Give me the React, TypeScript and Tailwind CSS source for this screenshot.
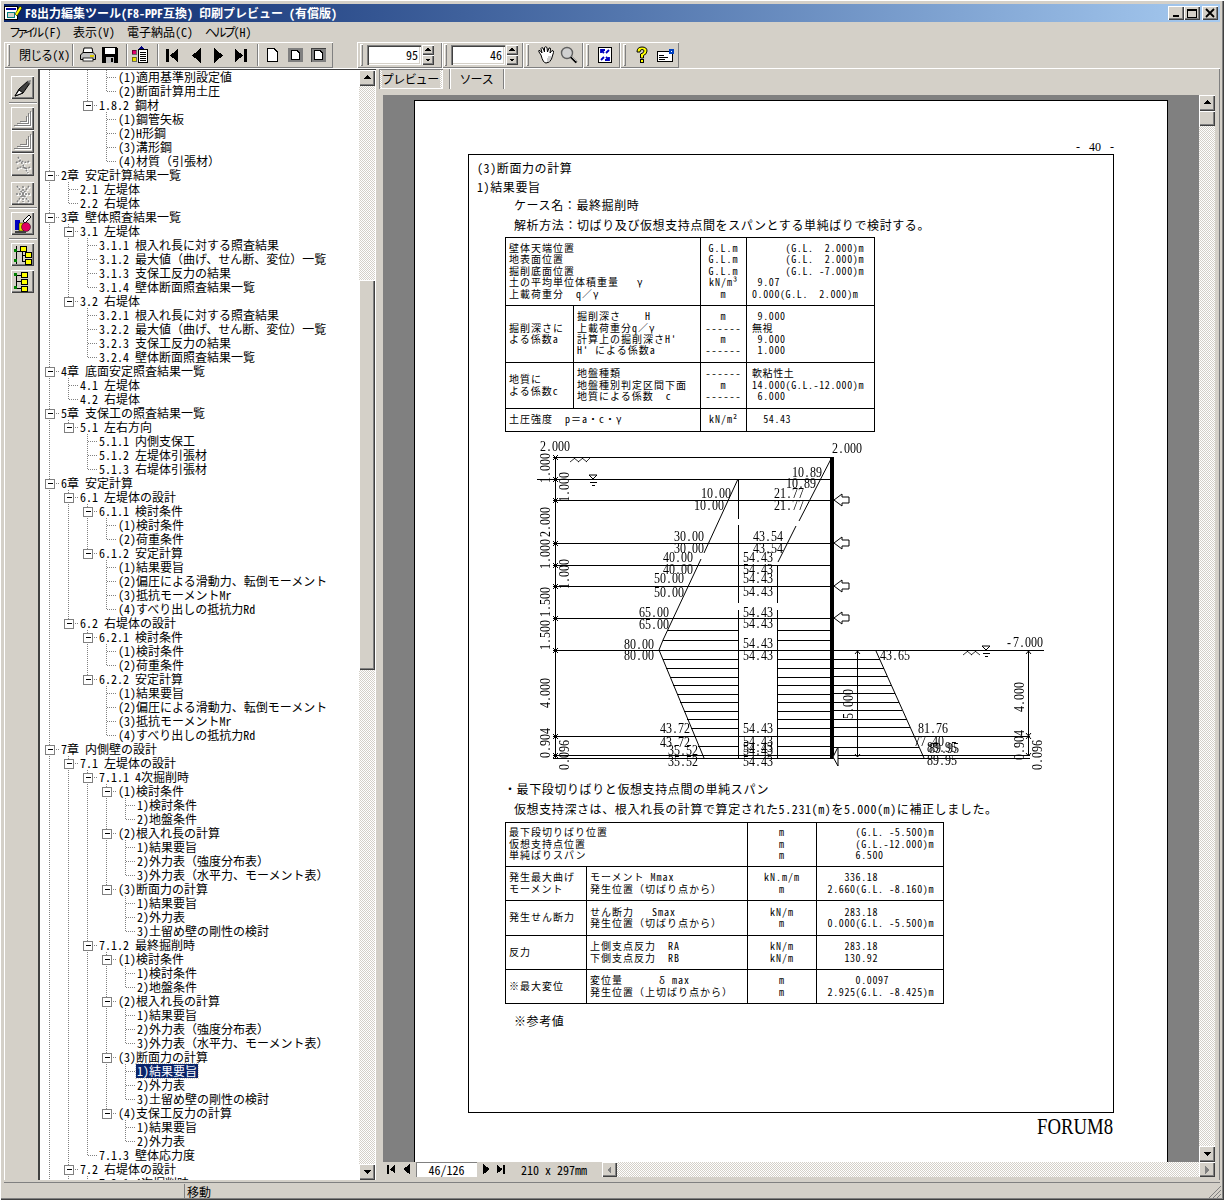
import React from 'react'

const raised = 'shadow-[inset_1px_1px_0_#fff,inset_-1px_-1px_0_#404040,inset_-2px_-2px_0_#808080]'
const sunken = 'shadow-[inset_1px_1px_0_#808080,inset_2px_2px_0_#404040,inset_-1px_-1px_0_#fff,inset_-2px_-2px_0_#d4d0c8]'
const band = 'shadow-[inset_1px_1px_0_#fff,inset_-1px_-1px_0_#808080]'
const checker = 'bg-[repeating-conic-gradient(#d4d0c8_0_25%,#fff_0_50%)] bg-[length:2px_2px]'
const uiText = "[font-feature-settings:'palt','hwid']"

// hwid squeezes full-width punctuation too, so those marks get it switched off
function fw(s: string) {
    return s.split(/([（）：／＝・])/).map((p, i) => (i % 2 ? <span key={i} className="[font-feature-settings:normal]">{p}</span> : p))
}

// tree rows: level, label
const rows: [number, string][] = [
    [3, '(1)適用基準別設定値'], [3, '(2)断面計算用土圧'], [2, '1.8.2 鋼材'], [3, '(1)鋼管矢板'], [3, '(2)H形鋼'], [3, '(3)溝形鋼'], [3, '(4)材質（引張材）'],
    [0, '2章 安定計算結果一覧'], [1, '2.1 左堤体'], [1, '2.2 右堤体'],
    [0, '3章 壁体照査結果一覧'], [1, '3.1 左堤体'], [2, '3.1.1 根入れ長に対する照査結果'], [2, '3.1.2 最大値（曲げ、せん断、変位）一覧'], [2, '3.1.3 支保工反力の結果'], [2, '3.1.4 壁体断面照査結果一覧'],
    [1, '3.2 右堤体'], [2, '3.2.1 根入れ長に対する照査結果'], [2, '3.2.2 最大値（曲げ、せん断、変位）一覧'], [2, '3.2.3 支保工反力の結果'], [2, '3.2.4 壁体断面照査結果一覧'],
    [0, '4章 底面安定照査結果一覧'], [1, '4.1 左堤体'], [1, '4.2 右堤体'],
    [0, '5章 支保工の照査結果一覧'], [1, '5.1 左右方向'], [2, '5.1.1 内側支保工'], [2, '5.1.2 左堤体引張材'], [2, '5.1.3 右堤体引張材'],
    [0, '6章 安定計算'], [1, '6.1 左堤体の設計'], [2, '6.1.1 検討条件'], [3, '(1)検討条件'], [3, '(2)荷重条件'], [2, '6.1.2 安定計算'], [3, '(1)結果要旨'], [3, '(2)偏圧による滑動力、転倒モーメント'], [3, '(3)抵抗モーメントMr'], [3, '(4)すべり出しの抵抗力Rd'],
    [1, '6.2 右堤体の設計'], [2, '6.2.1 検討条件'], [3, '(1)検討条件'], [3, '(2)荷重条件'], [2, '6.2.2 安定計算'], [3, '(1)結果要旨'], [3, '(2)偏圧による滑動力、転倒モーメント'], [3, '(3)抵抗モーメントMr'], [3, '(4)すべり出しの抵抗力Rd'],
    [0, '7章 内側壁の設計'], [1, '7.1 左堤体の設計'], [2, '7.1.1 4次掘削時'], [3, '(1)検討条件'], [4, '1)検討条件'], [4, '2)地盤条件'], [3, '(2)根入れ長の計算'], [4, '1)結果要旨'], [4, '2)外力表（強度分布表）'], [4, '3)外力表（水平力、モーメント表）'], [3, '(3)断面力の計算'], [4, '1)結果要旨'], [4, '2)外力表'], [4, '3)土留め壁の剛性の検討'],
    [2, '7.1.2 最終掘削時'], [3, '(1)検討条件'], [4, '1)検討条件'], [4, '2)地盤条件'], [3, '(2)根入れ長の計算'], [4, '1)結果要旨'], [4, '2)外力表（強度分布表）'], [4, '3)外力表（水平力、モーメント表）'], [3, '(3)断面力の計算'], [4, '1)結果要旨'], [4, '2)外力表'], [4, '3)土留め壁の剛性の検討'], [3, '(4)支保工反力の計算'], [4, '1)結果要旨'], [4, '2)外力表'],
    [2, '7.1.3 壁体応力度'], [1, '7.2 右堤体の設計'], [2, '7.2.1 4次掘削時'],
]
const selectedRow = 71

// does column c keep going below row i?
function continues(i: number, c: number) {
    for (let j = i + 1; j < rows.length; j++) {
        if (rows[j][0] === c) return true
        if (rows[j][0] < c) return false
    }
    return true
}

function Connector({ i }: { i: number }) {
    const level = rows[i][0]
    const hasKids = i + 1 < rows.length && rows[i + 1][0] > level
    const w = 21 + 19 * level
    const dot = { stroke: '#808080', strokeDasharray: '1 1', shapeRendering: 'crispEdges' as const }
    const cx = 9.5 + 19 * level
    const cols = []
    for (let c = 0; c < level; c++) {
        if (continues(i, c)) cols.push(<line key={c} x1={9.5 + 19 * c} x2={9.5 + 19 * c} y1={0} y2={14} {...dot} />)
    }
    return (
        <svg width={w} height={14} className="shrink-0">
            {cols}
            <line x1={cx} x2={cx} y1={0} y2={continues(i, level) ? 14 : 7} {...dot} />
            <line x1={cx} x2={cx + 10} y1={7.5} y2={7.5} {...dot} />
            {hasKids && (
                <g shapeRendering="crispEdges">
                    <rect x={cx - 4} y={3.5} width={9} height={9} fill="#fff" stroke="#808080" />
                    <line x1={cx - 2} x2={cx + 3} y1={7.5} y2={7.5} stroke="#000" />
                </g>
            )}
        </svg>
    )
}

function Tree() {
    return (
        <div className="flex-1 overflow-hidden bg-white">
            {rows.map((r, i) => (
                <div key={i} className="flex h-[14px] items-center whitespace-pre text-[12px] leading-[14px] text-black">
                    <Connector i={i} />
                    <span className={i === selectedRow ? 'ml-[-1px] bg-[#0a246a] pl-px pr-px text-white outline-1 outline-dotted outline-[#d4d0c8]' : ''}>{fw(r[1])}</span>
                </div>
            ))}
        </div>
    )
}

function Tri({ dir, disabled }: { dir: 'up' | 'down' | 'left' | 'right'; disabled?: boolean }) {
    const pts = { up: '1,6 5,2 9,6', down: '1,3 9,3 5,7', left: '6,1 6,9 2,5', right: '3,1 3,9 7,5' }[dir]
    return (
        <svg width={10} height={10} shapeRendering="crispEdges">
            <polygon points={pts} fill={disabled ? '#808080' : '#000'} />
        </svg>
    )
}

function ScrollBtn({ dir, disabled, className }: { dir: 'up' | 'down' | 'left' | 'right'; disabled?: boolean; className?: string }) {
    return (
        <div className={`flex shrink-0 items-center justify-center bg-[#d4d0c8] ${raised} ${className ?? ''}`}>
            <Tri dir={dir} disabled={disabled} />
        </div>
    )
}

function Gripper({ className }: { className?: string }) {
    return <div className={`h-[22px] w-[3px] shrink-0 bg-[#d4d0c8] shadow-[inset_1px_1px_0_#fff,inset_-1px_-1px_0_#808080] ${className ?? ''}`} />
}

function Sep({ ml }: { ml: string }) {
    return <div className={`h-[22px] w-[2px] shrink-0 border-l border-r border-l-[#808080] border-r-white ${ml}`} />
}

function Spin({ value, ml }: { value: string; ml: string }) {
    return (
        <div className={`flex shrink-0 ${ml}`}>
            <div className={`flex h-[20px] w-[54px] items-center justify-end bg-white pr-[3px] text-[12px] ${sunken}`}>{value}</div>
            <div className="ml-px flex w-[12px] flex-col">
                <ScrollBtn dir="up" className="h-[10px] w-[12px] [&>svg]:scale-75" />
                <ScrollBtn dir="down" className="h-[10px] w-[12px] [&>svg]:scale-75" />
            </div>
        </div>
    )
}

/* toolbar drawings */
const AppIcon = () => (
    <svg width={18} height={16} shapeRendering="crispEdges">
        <rect x={0.5} y={1.5} width={13} height={13} fill="#fff" stroke="#000" />
        <rect x={2} y={3} width={10} height={2} fill="#0000a0" />
        <rect x={3} y={7} width={7} height={5} fill="#d4d0c8" stroke="#008080" />
        <path d="M11 9 L16 1 L18 3 L13 11 Z" fill="#ffff00" stroke="#000" strokeWidth={0.6} shapeRendering="auto" />
    </svg>
)
const Printer = () => (
    <svg width={18} height={16} className="shrink-0">
        <path d="M5 1 H13 L14 6 H4 Z" fill="#fff" stroke="#000" />
        <path d="M1.5 8 L4 5.5 H14 L16.5 8 V12.5 H1.5 Z" fill="#c0c0c0" stroke="#000" />
        <rect x={4} y={11} width={10} height={3} fill="#fff" stroke="#000" strokeWidth={0.8} />
        <rect x={11} y={8} width={4} height={2} fill="#e0d000" />
    </svg>
)
const Floppy = () => (
    <svg width={16} height={16} className="shrink-0" shapeRendering="crispEdges">
        <path d="M0 0 H14 L16 2 V16 H0 Z" fill="#000" />
        <rect x={3} y={1} width={10} height={6} fill="#fff" />
        <rect x={4} y={10} width={8} height={6} fill="#c0c0c0" />
        <rect x={9} y={11} width={2} height={4} fill="#000" />
    </svg>
)
const ListIcon = () => (
    <svg width={16} height={18} className="shrink-0" shapeRendering="crispEdges">
        <path d="M9 0 L12 3 H6 Z" fill="#000080" />
        <rect x={6.5} y={3.5} width={9} height={13} fill="#fff" stroke="#000" />
        <path d="M8 6H14M8 8H14M8 10H14M8 12H14M8 14H14" stroke="#000" />
        <rect x={0} y={4} width={4} height={4} fill="#e0006a" stroke="#000" strokeWidth={0.5} />
        <rect x={0} y={11} width={4} height={4} fill="#e8e000" stroke="#000" strokeWidth={0.5} />
    </svg>
)
const Nav = ({ kind, size = 13 }: { kind: 'first' | 'prev' | 'next' | 'last'; size?: number }) => (
    <svg width={size} height={(size * 15) / 13} viewBox="0 0 13 15" className="block shrink-0" shapeRendering="crispEdges">
        {kind === 'first' && <path d="M0 1H3V14H0Z M12 1V14L4 7.5Z" />}
        {kind === 'prev' && <path d="M11 0V15L2 7.5Z" />}
        {kind === 'next' && <path d="M2 0V15L11 7.5Z" />}
        {kind === 'last' && <path d="M9 1H12V14H9Z M0 1V14L8 7.5Z" />}
    </svg>
)
const PageIco = ({ framed }: { framed?: number }) => (
    <svg width={15} height={14} className="shrink-0" shapeRendering="crispEdges">
        {framed === 1 && <rect x={0} y={0} width={15} height={14} fill="#808080" />}
        {framed === 2 && <rect x={0} y={0} width={15} height={14} fill="#808080" stroke="#000" strokeWidth={0.5} />}
        <path d={framed ? 'M3.5 2.5 H9 L11.5 5 V11.5 H3.5 Z' : 'M2.5 0.5 H9 L12.5 4 V13.5 H2.5 Z'} fill="#fff" stroke="#000" />
    </svg>
)
const Hand = () => (
    <svg width={18} height={18} className="shrink-0">
        <path d="M4 9 L2 6 Q1 4 3 4.5 L5 7 L4 2.5 Q4.5 1 6 2 L7.5 6 V1.5 Q8.5 0 10 1.5 L10.5 6 L12 2 Q13.5 1.5 13.5 3 L13 7 L15 4.5 Q17 4.5 16.5 6.5 L14.5 13 Q13 17 9 17 Q6 17 4 9 Z" fill="#fff" stroke="#000" />
        <path d="M11 11H14M10 13H14M10 15H13" stroke="#a0a0a0" />
    </svg>
)
const Magnifier = () => (
    <svg width={18} height={18} className="shrink-0">
        <circle cx={7} cy={7} r={5.5} fill="#d0d0d0" stroke="#606060" strokeWidth={1.4} />
        <path d="M11 11 L16.5 16.5" stroke="#000" strokeWidth={2.4} />
        <path d="M11.5 10.5 L16.5 15.5" stroke="#fff" strokeWidth={0.7} />
    </svg>
)
const FitIcon = () => (
    <svg width={14} height={16} className="shrink-0">
        <rect x={0.5} y={0.5} width={13} height={15} fill="#fff" stroke="#000" />
        <path d="M3 6 V3 H7 M11 10 V13 H7 M3 3 L6 6 M11 13 L8 10 M11 3 L8 6 M3 13 L6 10" stroke="#0000c0" strokeWidth={1.8} fill="none" />
    </svg>
)
const Question = () => (
    <svg width={14} height={18} className="shrink-0">
        <path d="M2 6 Q2 1 7 1 Q12 1 12 5 Q12 8 8.5 9.5 V12 H5.5 V8 Q9 7 9 5 Q9 3.5 7 3.5 Q5 3.5 5 6 Z" fill="#ffff00" stroke="#000" />
        <rect x={5.5} y={13.5} width={3} height={3} fill="#ffff00" stroke="#000" />
    </svg>
)
const Card = () => (
    <svg width={17} height={13} className="shrink-0" shapeRendering="crispEdges">
        <rect x={0.5} y={2.5} width={15} height={10} fill="#fff" stroke="#000" />
        <path d="M2 6H7M2 8H11M2 10H8" stroke="#000" />
        <rect x={12} y={0} width={5} height={5} fill="#0040c0" />
        <rect x={14} y={2} width={1} height={1} fill="#fff" />
    </svg>
)

const ToolBtn = ({ children, y = '' }: { children?: React.ReactNode; y?: string }) => (
    <div className={`flex h-[23px] w-[23px] items-center justify-center bg-[#d4d0c8] ${raised} ${y}`}>{children}</div>
)
const HSep = ({ my }: { my: string }) => <div className={`h-[2px] w-[28px] shrink-0 border-b border-t border-b-white border-t-[#808080] ${my}`} />

const Stairs = () => (
    <svg width={19} height={17} shapeRendering="crispEdges">
        <path d="M17 1V15H1M4 13H15V3M7 11H13V6" fill="none" stroke="#808080" />
        <path d="M18 2V16H2M5 14H16V4M8 12H14V7" fill="none" stroke="#fff" />
    </svg>
)
const Ghost = ({ rot }: { rot?: boolean }) => (
    <svg width={18} height={20} viewBox="0 0 18 20">
        <path d={rot ? 'M3 2L15 18M15 2L3 18M2 10H16M9 2V18' : 'M4 2L14 18M2 8C7 3 12 10 15 6M3 14C8 9 12 16 16 12'} fill="none" stroke="#fff" strokeWidth={2.4} strokeDasharray="2 1" transform="translate(.8 .8)" />
        <path d={rot ? 'M3 2L15 18M15 2L3 18M2 10H16M9 2V18' : 'M4 2L14 18M2 8C7 3 12 10 15 6M3 14C8 9 12 16 16 12'} fill="none" stroke="#808080" strokeWidth={1.5} strokeDasharray="2 1" />
    </svg>
)
const TreeIco = ({ tall }: { tall?: boolean }) => (
    <svg width={18} height={20} shapeRendering="crispEdges">
        <path d={tall ? 'M2 1V19 M2 6H8 M8 6V16 M8 10H12 M8 16H12' : 'M2 3V16 M2 3H8 M2 9H8 M2 16H8'} fill="none" stroke="#000" strokeWidth={1} />
        {(tall ? [[6, 1], [11, 7], [11, 14]] : [[7, 0], [7, 7], [7, 14]]).map(([x, y], k) => (
            <rect key={k} x={x + 0.5} y={y + 0.5} width={6} height={5} fill="#ffff00" stroke="#000" />
        ))}
        <rect x={0} y={tall ? 4 : 1} width={3} height={3} fill="#008000" />
        <rect x={0} y={14} width={3} height={3} fill="#008000" />
    </svg>
)

/* pressure diagram: tall glyphs squeezed to a 6px pitch */
function T({ x, y, s, rot }: { x: number; y: number; s: string; rot?: boolean }) {
    const xs = s.split('').map((c, i) => i * 7.5 + (c === '.' ? 2 : 0)).join(' ')
    return (
        <text x={xs} y={0} fontFamily="Liberation Serif, serif" fontSize={15} fill="#000" transform={`translate(${x} ${y}) ${rot ? 'rotate(-90) ' : ''}scale(.8 1)`}>
            {s}
        </text>
    )
}

function Diagram() {
    const lv = [479, 500, 543, 565, 586, 618, 650, 736, 755, 758]
    const hL = [630, 640.5, 659, 668, 677, 685, 694, 702, 711, 719, 728, 746]
    const hR = [659, 668, 676, 685, 693, 702, 710, 719, 727, 747]
    const edgeL = (y: number) => (y < 650 ? 659 + ((650 - y) * 79) / 171 : 659 + ((y - 650) * 44) / 108)
    const edgeR = (y: number) => 876 + ((y - 651) * 48) / 107
    const labels: [number, number, string][] = [
        [540, 451, '2.000'], [832, 453, '2.000'],
        [792, 477, '10.89'], [786, 488, '10.89'], [774, 498, '21.77'], [774, 510, '21.77'],
        [701, 498, '10.00'], [694, 510, '10.00'], [674, 541, '30.00'], [674, 553, '30.00'], [663, 562, '40.00'], [663, 574, '40.00'],
        [654, 583, '50.00'], [654, 597, '50.00'], [639, 617, '65.00'], [639, 629, '65.00'], [624, 649, '80.00'], [624, 660, '80.00'],
        [660, 733, '43.72'], [660, 747, '43.72'], [668, 755, '35.52'], [668, 766, '35.52'],
        [753, 541, '43.54'], [753, 553, '43.54'],
        ...[562, 574, 583, 596, 617, 628, 648, 660, 733, 746, 752, 755, 766].map((y): [number, number, string] => [743, y, '54.43']),
        [880, 660, '43.65'], [918, 733, '81.76'], [914, 746, '77.40'], [927, 752, '89.95'], [929, 753, '89.95'], [927, 765, '89.95'],
        [1007, 647, '-7.000'],
    ]
    const rotated: [number, number, string][] = [
        [550, 483, '1.000'], [550, 537, '2.000'], [550, 569, '1.000'], [550, 617, '1.500'], [550, 650, '1.500'], [550, 708, '4.000'], [550, 758, '0.904'],
        [569, 502, '1.000'], [569, 589, '1.000'], [569, 770, '0.096'],
        [853, 719, '5.000'], [1024, 712, '4.000'], [1024, 760, '0.904'], [1042, 770, '0.096'],
    ]
    return (
        <svg width={530} height={346} viewBox="530 432 530 346" className="ml-[53px] block [will-change:transform]">
            <g shapeRendering="crispEdges" stroke="#000" fill="none">
                <line x1={553} x2={832} y1={457.5} y2={457.5} />
                {lv.map(y => (
                    <line key={y} x1={y === 479 ? 537 : 553} x2={y >= 736 ? 1030 : y === 650 ? 1044 : 832} y1={y + 0.5} y2={y + 0.5} />
                ))}
                <line x1={555.5} x2={555.5} y1={457} y2={759} />
                <line x1={738.5} x2={738.5} y1={479} y2={519} />
                <line x1={738.5} x2={738.5} y1={525} y2={603} />
                <line x1={738.5} x2={738.5} y1={610} y2={758} />
                <line x1={777.5} x2={777.5} y1={565} y2={603} />
                <line x1={777.5} x2={777.5} y1={610} y2={758} />
                {hL.map(y => (
                    <line key={y} x1={edgeL(y)} x2={738} y1={y} y2={y} />
                ))}
                {hL.map(y => (
                    <line key={y} x1={778} x2={831} y1={y} y2={y} />
                ))}
                {hR.map(y => (
                    <line key={y} x1={832} x2={edgeR(y)} y1={y} y2={y} />
                ))}
                <rect x={830} y={457} width={3} height={301} fill="#000" />
                <line x1={857.5} x2={857.5} y1={651} y2={757} />
                <line x1={1028.5} x2={1028.5} y1={651} y2={756} />
            </g>
            <g stroke="#000" fill="none">
                <path d="M738 479 L704 553 M701 559 L663 640 L659 650 L704 758" />
                <path d="M832 457 L799 521 M796 526 L778 562" />
                <path d="M876 651 L924 758" />
                {[457, 479, 500, 543, 565, 586, 618, 650, 736, 755].map(y => (
                    <path key={y} d={`M553 ${y - 2} L558 ${y + 3} M558 ${y - 2} L553 ${y + 3}`} />
                ))}
                <path d="M570 462 L575 458 M574 458 L579 462 M578 462 L583 458 M582 458 L587 462 M586 462 L590 458" strokeWidth={0.8} />
                <path d="M963 655 L968 651 M967 651 L972 655 M971 655 L976 651 M975 651 L980 655" strokeWidth={0.8} />
                <path d="M589 475 H597 L593 479 Z M590 482.5 H597 M592 485.5 H595" />
                <path d="M982 646 H990 L986 650 Z M983 653.5 H990 M985 656.5 H988" />
                {[500, 543, 586, 618].map(y => (
                    <path key={y} d={`M834 ${y} L842 ${y - 6} V${y - 3} H849 V${y + 3} H842 V${y + 6} Z`} fill="#fff" />
                ))}
                <path d="M833 757 L838 747 V766 Z" fill="#fff" />
                <path d="M855 654 L857.5 651 L860 654 M855 754 L857.5 757 L860 754" />
                <path d="M1026 654 L1028.5 651 L1031 654 M1026 739 L1031 733 M1031 739 L1026 733 M1026 753 L1028.5 756 L1031 753" />
            </g>
            {labels.map(([x, y, s], k) => (
                <T key={k} x={x} y={y} s={s} />
            ))}
            {rotated.map(([x, y, s], k) => (
                <T key={k} x={x} y={y} s={s} rot />
            ))}
        </svg>
    )
}

const cell = 'border border-black whitespace-pre align-middle px-[3px] pt-0 pb-[2px]'
const unit = 'border border-black whitespace-pre align-middle text-center p-0 pb-[2px]'
const val = 'border border-black whitespace-pre align-middle pl-[5px] pr-0 pt-0 pb-[2px] tracking-[0.6px]'

function Table1() {
    return (
        <table className="ml-[28px] w-[369px] table-fixed border-collapse text-[10px] leading-[11.4px] tracking-[1px] text-black">
            <colgroup><col className="w-[68px]" /><col className="w-[127px]" /><col className="w-[46px]" /><col className="w-[128px]" /></colgroup>
            <tbody>
                <tr className="h-[68px]">
                    <td colSpan={2} className={cell}>{fw('壁体天端位置\n地表面位置\n掘削底面位置\n土の平均単位体積重量   γ\n上載荷重分  q／γ')}</td>
                    <td className={unit}>{'G.L.m\nG.L.m\nG.L.m\nkN/m³\nm'}</td>
                    <td className={val}>{'      (G.L.  2.000)m\n      (G.L.  2.000)m\n      (G.L. -7.000)m\n 9.07\n0.000(G.L.  2.000)m'}</td>
                </tr>
                <tr className="h-[57px]">
                    <td className={cell}>{'掘削深さに\nよる係数a'}</td>
                    <td className={cell}>{fw('掘削深さ    H\n上載荷重分q／γ\n計算上の掘削深さH\'\nH\' による係数a')}</td>
                    <td className={unit}>{'m\n------\nm\n------'}</td>
                    <td className={val}>{' 9.000\n無視\n 9.000\n 1.000'}</td>
                </tr>
                <tr className="h-[46px]">
                    <td className={cell}>{'地質に\nよる係数c'}</td>
                    <td className={cell}>{'地盤種類\n地盤種別判定区間下面\n地質による係数  c'}</td>
                    <td className={unit}>{'------\nm\n------'}</td>
                    <td className={val}>{'軟粘性土\n14.000(G.L.-12.000)m\n 6.000'}</td>
                </tr>
                <tr className="h-[23px]">
                    <td colSpan={2} className={cell}>{fw('土圧強度  p＝a・c・γ')}</td>
                    <td className={unit}>kN/m²</td>
                    <td className={val}>{'  54.43'}</td>
                </tr>
            </tbody>
        </table>
    )
}

function Table2() {
    return (
        <table className="ml-[28px] w-[438px] table-fixed border-collapse text-[10px] leading-[11.4px] tracking-[1px] text-black">
            <colgroup><col className="w-[81px]" /><col className="w-[161px]" /><col className="w-[69px]" /><col className="w-[127px]" /></colgroup>
            <tbody>
                <tr className="h-[44px]">
                    <td colSpan={2} className={cell}>{'最下段切りばり位置\n仮想支持点位置\n単純ばりスパン'}</td>
                    <td className={unit}>{'m\nm\nm'}</td>
                    <td className={val}>{'      (G.L. -5.500)m\n      (G.L.-12.000)m\n      6.500'}</td>
                </tr>
                <tr className="h-[34px]">
                    <td className={cell}>{'発生最大曲げ\nモーメント'}</td>
                    <td className={cell}>{fw('モーメント Mmax\n発生位置（切ばり点から）')}</td>
                    <td className={unit}>{'kN.m/m\nm'}</td>
                    <td className={val}>{'    336.18\n 2.660(G.L. -8.160)m'}</td>
                </tr>
                <tr className="h-[35px]">
                    <td className={cell}>発生せん断力</td>
                    <td className={cell}>{fw('せん断力   Smax\n発生位置（切ばり点から）')}</td>
                    <td className={unit}>{'kN/m\nm'}</td>
                    <td className={val}>{'    283.18\n 0.000(G.L. -5.500)m'}</td>
                </tr>
                <tr className="h-[34px]">
                    <td className={cell}>反力</td>
                    <td className={cell}>{'上側支点反力  RA\n下側支点反力  RB'}</td>
                    <td className={unit}>{'kN/m\nkN/m'}</td>
                    <td className={val}>{'    283.18\n    130.92'}</td>
                </tr>
                <tr className="h-[34px]">
                    <td className={cell}>※最大変位</td>
                    <td className={cell}>{fw('変位量      δ max\n発生位置（上切ばり点から）')}</td>
                    <td className={unit}>{'m\nm'}</td>
                    <td className={val}>{'      0.0097\n 2.925(G.L. -8.425)m'}</td>
                </tr>
            </tbody>
        </table>
    )
}

function Page() {
    return (
        <div className="h-[1100px] w-[754px] shrink-0 border border-black bg-white pl-[53px] pt-[40px] text-[12px] leading-[12px] tracking-[0.6px] text-black">
            <div className="w-[646px] text-right text-[12px] leading-[12px] tracking-normal whitespace-pre [word-spacing:6px] [font-family:'Liberation_Serif',serif]">- 40 -</div>
            <div className="mt-px h-[959px] w-[646px] border border-black pl-[8px] pt-[7px]">
                <div>(3)断面力の計算</div>
                <div className="mt-[7px]">1)結果要旨</div>
                <div className="ml-[37px] mt-[6px]">{fw('ケース名：最終掘削時')}</div>
                <div className="ml-[37px] mt-[8px]">{fw('解析方法：切ばり及び仮想支持点間をスパンとする単純ばりで検討する。')}</div>
                <div className="mt-[6px]"><Table1 /></div>
                <Diagram />
                <div className="ml-[27px] mt-[5px]">{fw('・最下段切りばりと仮想支持点間の単純スパン')}</div>
                <div className="ml-[37px] mt-[8px]">仮想支持深さは、根入れ長の計算で算定された5.231(m)を5.000(m)に補正しました。</div>
                <div className="mt-[7px]"><Table2 /></div>
                <div className="ml-[37px] mt-[11px]">※参考値</div>
            </div>
            <div className="mt-[1px] w-[645px] origin-right scale-x-[0.78] text-right text-[24px] leading-[24px] tracking-normal [font-family:'Liberation_Serif',serif]">FORUM8</div>
        </div>
    )
}

export default function App() {
    return (
        <div className="flex h-[1200px] w-[1224px] flex-col overflow-hidden bg-[#d4d0c8] pl-[4px] pr-[4px] pt-[4px] text-black [font-family:'Noto_Sans_CJK_JP',sans-serif] [font-feature-settings:'hwid'] shadow-[inset_1px_1px_0_#fff,inset_-1px_-1px_0_#404040,inset_-2px_-2px_0_#808080]">
            {/* title bar */}
            <div className="flex h-[18px] shrink-0 items-center bg-gradient-to-r from-[#0a246a] to-[#a6caf0] pr-[2px]">
                <AppIcon />
                <span className="ml-[3px] whitespace-pre text-[12px] font-bold leading-[18px] text-white">F8出力編集ツール(F8-PPF互換) 印刷プレビュー (有償版)</span>
                <div className={`ml-auto flex h-[14px] w-[16px] items-end justify-center bg-[#d4d0c8] pb-[3px] ${raised}`}><div className="h-[2px] w-[6px] bg-black" /></div>
                <div className={`flex h-[14px] w-[16px] items-center justify-center bg-[#d4d0c8] ${raised}`}><div className="h-[9px] w-[10px] border border-t-2 border-black" /></div>
                <div className={`ml-[2px] flex h-[14px] w-[16px] items-center justify-center bg-[#d4d0c8] ${raised}`}>
                    <svg width={10} height={10}><path d="M1 1L9 9M9 1L1 9" stroke="#000" strokeWidth={1.8} /></svg>
                </div>
            </div>
            {/* menu */}
            <div className={`flex h-[20px] shrink-0 items-center whitespace-nowrap pl-[6px] text-[12px] text-black ${uiText}`}>
                <span className="w-[63px]"><span className="tracking-[-2.5px]">ファイル</span><span className="ml-[2px]">(F)</span></span>
                <span className="w-[54px]">表示(V)</span>
                <span className="w-[78px]">電子納品(C)</span>
                <span><span className="tracking-[-2px]">ヘルプ</span>(H)</span>
            </div>
            {/* toolbar */}
            <div className="flex h-[27px] shrink-0 border-b border-b-white">
                <div className={`flex h-[26px] w-[329px] shrink-0 items-center ${band}`}>
                    <Gripper className="ml-[3px]" />
                    <span className={`ml-[9px] w-[45px] shrink-0 whitespace-nowrap text-[12px] ${uiText}`}>閉じる(X)</span>
                    <Sep ml="ml-[8px]" />
                    <span className="ml-[5px]"><Printer /></span>
                    <span className="ml-[5px]"><Floppy /></span>
                    <Sep ml="ml-[8px]" />
                    <span className="ml-[4px]"><ListIcon /></span>
                    <Sep ml="ml-[9px]" />
                    <span className="ml-[7px]"><Nav kind="first" /></span>
                    <span className="ml-[11px]"><Nav kind="prev" /></span>
                    <span className="ml-[9px]"><Nav kind="next" /></span>
                    <span className="ml-[10px]"><Nav kind="last" /></span>
                    <Sep ml="ml-[9px]" />
                    <span className="ml-[6px]"><PageIco /></span>
                    <span className="ml-[8px]"><PageIco framed={1} /></span>
                    <span className="ml-[8px]"><PageIco framed={2} /></span>
                </div>
                <div className={`ml-[24px] flex h-[26px] w-[85px] shrink-0 items-center ${band}`}>
                    <Gripper className="ml-[3px]" />
                    <Spin value="95" ml="ml-[4px]" />
                </div>
                <div className={`flex h-[26px] w-[81px] shrink-0 items-center ${band}`}>
                    <Gripper className="ml-[2px]" />
                    <Spin value="46" ml="ml-[4px]" />
                </div>
                <div className={`flex h-[26px] w-[60px] shrink-0 items-center ${band}`}>
                    <Gripper className="ml-[3px]" />
                    <span className="ml-[8px]"><Hand /></span>
                    <span className="ml-[5px]"><Magnifier /></span>
                </div>
                <div className={`flex h-[26px] w-[37px] shrink-0 items-center ${band}`}>
                    <Gripper className="ml-[3px]" />
                    <span className="ml-[9px]"><FitIcon /></span>
                </div>
                <div className={`flex h-[26px] w-[59px] shrink-0 items-center ${band}`}>
                    <Gripper className="ml-[3px]" />
                    <span className="ml-[9px]"><Question /></span>
                    <span className="ml-[8px]"><Card /></span>
                </div>
            </div>
            {/* main area */}
            <div className="flex h-[1111px] shrink-0">
                <div className="flex w-[34px] shrink-0 flex-col items-center border-l border-l-white pl-[2px] pt-[7px]">
                    <ToolBtn>
                        <svg width={18} height={18}>
                            <path d="M1 17 L5 10 L14 2 L16 4 L9 14 Z" fill="#404040" stroke="#000" />
                            <path d="M1 17 L5 11 L9 14 Z" fill="#fff" stroke="#000" />
                            <path d="M13 2 L17 1 L16 5 Z" fill="#808080" />
                        </svg>
                    </ToolBtn>
                    <HSep my="my-[3px]" />
                    <ToolBtn><Stairs /></ToolBtn>
                    <ToolBtn><Stairs /></ToolBtn>
                    <ToolBtn><Ghost /></ToolBtn>
                    <ToolBtn y="mt-[6px]"><Ghost rot /></ToolBtn>
                    <HSep my="mt-[2px] mb-[3px]" />
                    <ToolBtn>
                        <svg width={19} height={20}>
                            <path d="M10 7 L16 1 L18 3 L12 9 Z" fill="#fff" stroke="#000" />
                            <rect x={2} y={6} width={5} height={10} fill="#0000c0" />
                            <rect x={6} y={9} width={5} height={8} fill="#e0e000" stroke="#000" strokeWidth={0.5} />
                            <circle cx={13} cy={13} r={4.5} fill="#e00060" stroke="#000" strokeWidth={0.5} />
                            <rect x={2} y={17} width={11} height={2} fill="#404040" />
                        </svg>
                    </ToolBtn>
                    <HSep my="my-[3px]" />
                    <ToolBtn><TreeIco tall /></ToolBtn>
                    <ToolBtn y="mt-[4px]"><TreeIco /></ToolBtn>
                </div>
                {/* tree */}
                <div className="flex h-[1111px] w-[338px] shrink-0 border-l-2 border-t border-l-[#404040] border-t-[#404040]">
                    <Tree />
                    <div className="flex w-[16px] shrink-0 flex-col">
                        <ScrollBtn dir="up" className="h-[16px] w-[16px]" />
                        <div className={`h-[194px] ${checker}`} />
                        <div className={`h-[390px] bg-[#d4d0c8] ${raised}`} />
                        <div className={`flex-1 ${checker}`} />
                        <ScrollBtn dir="down" className="h-[16px] w-[16px]" />
                    </div>
                    <div className="w-px shrink-0 bg-white" />
                </div>
                {/* preview pane */}
                <div className="flex min-w-0 flex-1 flex-col border-r border-r-[#808080]">
                    <div className="flex h-[26px] shrink-0 items-start pl-[3px] text-[12px]">
                        <div className={`flex h-[20px] w-[64px] items-center justify-center ${checker} shadow-[inset_1px_1px_0_#808080,inset_-1px_-1px_0_#fff]`}><span className={`bg-[#d4d0c8] tracking-[0.5px] ${uiText}`}>プレビュー</span></div>
                        <div className="ml-[6px] h-[20px] w-[2px] border-l border-r border-l-[#808080] border-r-white" />
                        <div className={`flex h-[20px] w-[52px] items-center justify-center tracking-[0.5px] ${uiText}`}>ソース</div>
                        <div className="h-[20px] w-[2px] border-l border-r border-l-[#808080] border-r-white" />
                    </div>
                    <div className="flex h-[1067px] shrink-0 pl-[7px]">
                        <div className="flex w-[816px] shrink-0 overflow-hidden bg-[#808080] pl-[31px] pt-[5px]">
                            <Page />
                        </div>
                        <div className="flex w-[16px] shrink-0 flex-col">
                            <ScrollBtn dir="up" className="h-[16px] w-[16px]" />
                            <div className={`h-[15px] bg-[#d4d0c8] ${raised}`} />
                            <div className={`flex-1 ${checker}`} />
                            <ScrollBtn dir="down" className="h-[16px] w-[16px]" />
                        </div>
                    </div>
                    <div className="flex h-[15px] shrink-0 items-center pl-[11px] text-[12px] leading-[15px]">
                        <Nav kind="first" size={9} />
                        <span className="ml-[6px]"><Nav kind="prev" size={9} /></span>
                        <div className="ml-[5px] flex h-[15px] w-[61px] items-center justify-center bg-white shadow-[inset_1px_1px_0_#808080]">46/126</div>
                        <span className="ml-[5px]"><Nav kind="next" size={9} /></span>
                        <span className="ml-[6px]"><Nav kind="last" size={9} /></span>
                        <span className="ml-[15px] whitespace-pre">210 x 297mm</span>
                        <ScrollBtn dir="left" disabled className="ml-[15px] h-[15px] w-[15px]" />
                        <div className={`h-[15px] flex-1 ${checker}`} />
                        <ScrollBtn dir="right" disabled className="h-[15px] w-[16px]" />
                        <div className="w-[4px]" />
                    </div>
                </div>
            </div>
            {/* status bar */}
            <div className="mt-[2px] flex h-[17px] shrink-0 items-center border-t border-t-[#808080] pt-px text-[12px]">
                <div className="h-[15px] w-[181px] border-r border-r-[#808080]" />
                <span className="ml-[2px] leading-[15px]">移動</span>
                <svg width={14} height={14} className="ml-auto mr-[-2px]">
                    <path d="M13 1L1 13M13 5L5 13M13 9L9 13" stroke="#808080" />
                </svg>
            </div>
        </div>
    )
}
